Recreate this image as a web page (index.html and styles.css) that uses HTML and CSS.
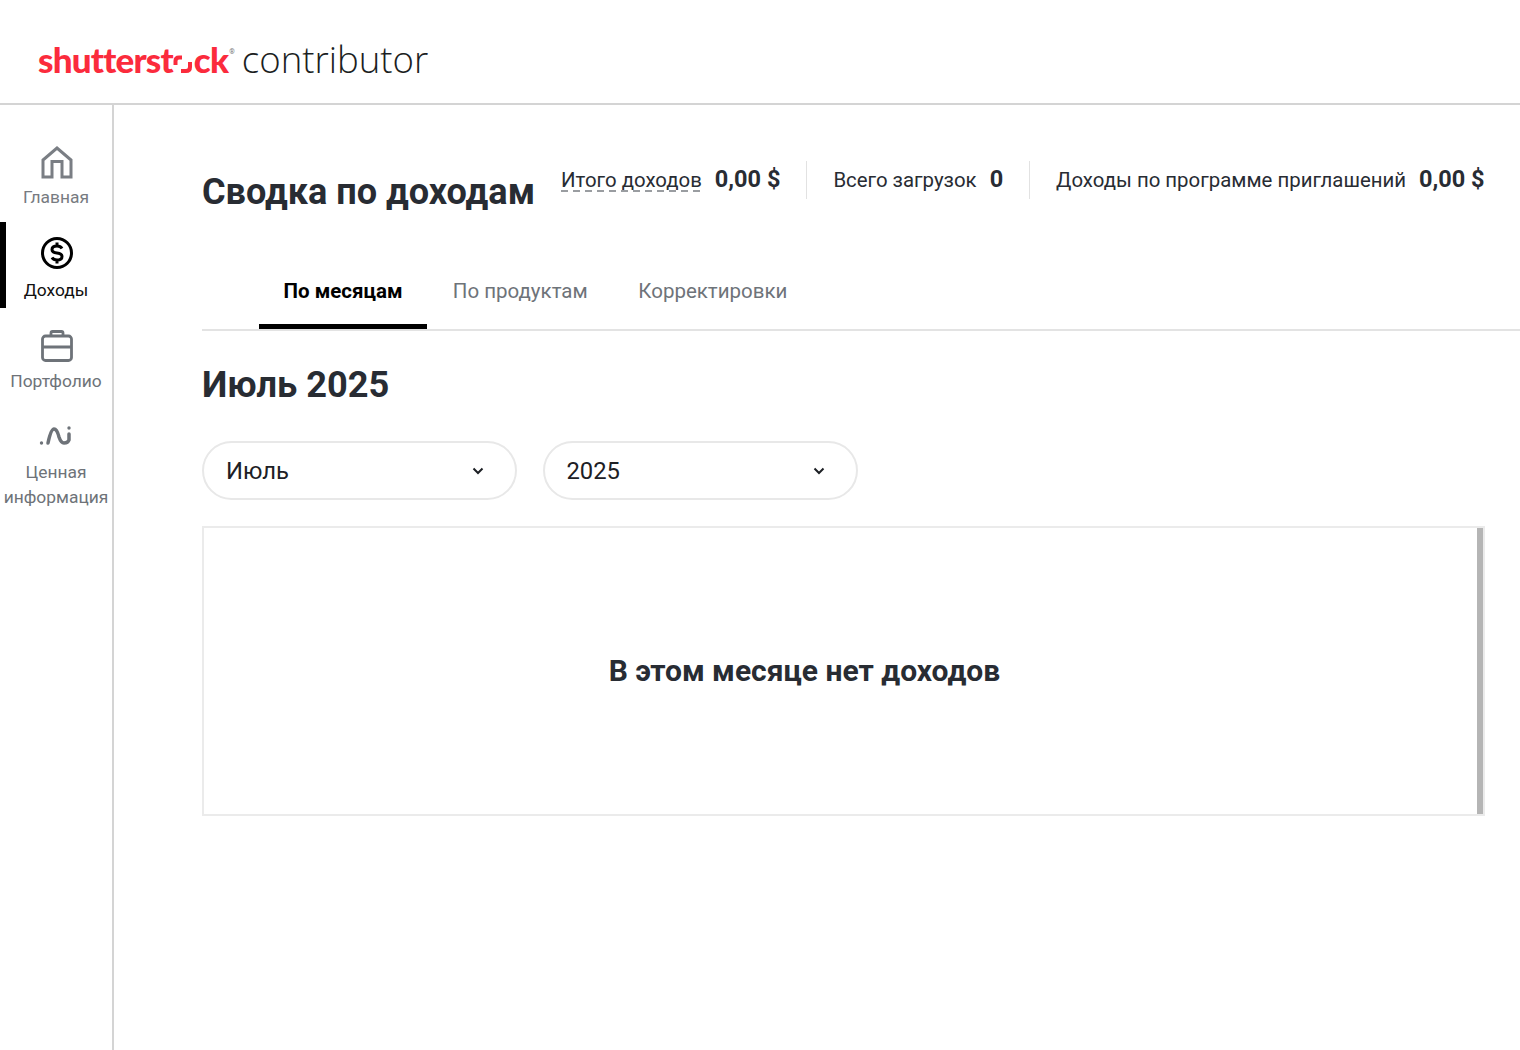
FILE: index.html
```html
<!DOCTYPE html>
<html lang="ru">
<head>
<meta charset="utf-8">
<title>Сводка по доходам</title>
<link rel="stylesheet" href="styles.css">
</head>
<body>
<header class="topbar">
  <a class="logo">
    <span class="logo-red">shutterst<svg class="logo-o" viewBox="0 0 20 20"><path d="M2.500 11V7Q2.500 3.500 6 3.500H9" /><path d="M17 8V13Q17 17 13 17H8" /></svg>ck</span><span class="logo-reg">®</span><span class="logo-sub">contributor</span>
  </a>
</header>
<div class="shell">
  <nav class="rail">
    <a class="rail-item item-home">
      <svg class="rail-icon" viewBox="0 0 36 36"><path d="M4 32V15L18 3L32 15V32H23V16.500H13V32Z"/></svg>
      <span>Главная</span>
    </a>
    <a class="rail-item item-earn active">
      <svg class="rail-icon" viewBox="0 0 36 36"><circle cx="18" cy="18" r="14.500"/><path d="M23 13.500Q21.500 11 18 11Q13 11 13 14.500Q13 17.500 18 18Q23 18.500 23 21.500Q23 25 18 25Q14.500 25 13 22.500M18 7.500V11M18 25V28.500"/></svg>
      <span>Доходы</span>
    </a>
    <a class="rail-item item-port">
      <svg class="rail-icon" viewBox="0 0 36 36"><rect x="3.500" y="8" width="29" height="24.500" rx="3"/><path d="M3.500 19H32.500M12 8V5Q12 3.500 13.500 3.500H22.500Q24 3.500 24 5V8"/></svg>
      <span>Портфолио</span>
    </a>
    <a class="rail-item item-info">
      <svg class="rail-icon icon-wave" viewBox="0 0 36 24"><path d="M9 19Q12 5 15 5Q18 5 20 13Q22 19 25 19Q29 19 30 16V10"/><circle class="dot" cx="2.500" cy="19" r="1.700"/><circle class="dot" cx="30" cy="4" r="1.700"/></svg>
      <span>Ценная<br>информация</span>
    </a>
  </nav>
  <main class="content">
    <div class="summary">
      <h1>Сводка по доходам</h1>
      <div class="stats">
        <div class="stat"><span class="dashed">Итого доходов</span><strong>0,00 $</strong></div>
        <div class="stat"><span>Всего загрузок</span><strong>0</strong></div>
        <div class="stat"><span>Доходы по программе приглашений</span><strong>0,00 $</strong></div>
      </div>
    </div>
    <div class="tabs">
      <a class="tab current">По месяцам</a>
      <a class="tab">По продуктам</a>
      <a class="tab">Корректировки</a>
    </div>
    <h2>Июль 2025</h2>
    <div class="filters">
      <div class="select"><span>Июль</span><svg viewBox="0 0 12 8"><path d="M1.500 1.500L6 6L10.500 1.500"/></svg></div>
      <div class="select"><span>2025</span><svg viewBox="0 0 12 8"><path d="M1.500 1.500L6 6L10.500 1.500"/></svg></div>
    </div>
    <section class="panel">
      <p>В этом месяце нет доходов</p>
      <div class="scrollbar"></div>
    </section>
  </main>
</div>
</body>
</html>
```
FILE: styles.css
```css
* { box-sizing: border-box; }
html, body { margin: 0; height: 100%; }
body {
  width: 1520px;
  height: 1050px;
  overflow: hidden;
  background: #fff;
  color: #282c33;
  font-family: Roboto, "Liberation Sans", sans-serif;
}
.topbar {
  height: 105px;
  border-bottom: 2px solid #d4d4d4;
  padding: 35px 0 0 38px;
}
.logo { display: flex; align-items: baseline; height: 48px; white-space: nowrap; }
.logo-red {
  font-family: Lato, sans-serif;
  font-weight: 900;
  font-size: 35px;
  letter-spacing: -0.800px;
  color: #fb2b3c;
  line-height: 48px;
}
.logo-o { width: 20px; height: 20px; margin: 0 1px -1px 0; fill: none; stroke: #fb2b3c; stroke-width: 4; }
.logo-reg { font-size: 7px; color: #777; position: relative; top: -19px; margin: 0 7px 0 1px; }
.logo-sub {
  font-family: "Open Sans", sans-serif;
  font-weight: 300;
  font-size: 36.600px;
  color: #1b1e22;
  line-height: 48px;
}
.shell { display: flex; height: 945px; }
.rail {
  width: 114px;
  flex: none;
  border-right: 2px solid #d4d4d4;
  padding-top: 38px;
  display: flex;
  flex-direction: column;
}
.rail-item {
  display: flex;
  flex-direction: column;
  align-items: center;
  font-size: 17.400px;
  line-height: 25px;
  color: #777b81;
  text-align: center;
  white-space: nowrap;
}
.rail-icon { width: 36px; height: 36px; fill: none; stroke: #6e7379; stroke-width: 2.600; flex: none; margin-left: 1px; }
.rail-item span { display: block; }
.item-home { height: 79px; }
.item-home .rail-icon { stroke: #7a7e84; stroke-width: 3; margin-top: 2px; margin-bottom: 4px; }
.item-earn {
  height: 86px;
  color: #111;
  border-left: 6px solid #000;
  padding-top: 13px;
  padding-right: 6px;
}
.item-earn .rail-icon { stroke: #000; stroke-width: 3; margin-bottom: 7px; }
.item-port { height: 92px; padding-top: 21px; color: #6e7379; }
.item-port .rail-icon { stroke-width: 2.800; margin-top: -1px; margin-bottom: 5px; }
.item-info { padding-top: 24px; color: #6e7379; }
.icon-wave { height: 24px; margin-bottom: 12px; stroke-linecap: round; stroke-width: 3.500; }
.dot { fill: #6e7379; stroke: none; }
.content { flex: 1; min-width: 0; padding: 54px 35px 0 88px; position: relative; }
.summary { display: flex; align-items: flex-start; }
h1 {
  margin: 13px 0 0;
  font-size: 36.100px;
  line-height: 40px;
  font-weight: 700;
  white-space: nowrap;
}
.stats { display: flex; margin-left: 26px; margin-top: 2px; }
.stat {
  display: flex;
  align-items: center;
  height: 38px;
  font-size: 20.400px;
  padding-right: 26px;
  margin-right: 26px;
  border-right: 1px solid #e2e2e2;
  white-space: nowrap;
}
.stat:last-child { border-right: 0; padding-right: 0; margin-right: 0; }
.stat strong { font-size: 23.500px; font-weight: 700; margin-left: 13px; position: relative; top: -1px; }
.dashed {
  line-height: 24px;
  background: repeating-linear-gradient(90deg, #9a9da1 0 7px, transparent 7px 12px) left bottom / 100% 2px no-repeat;
}
.tabs {
  display: flex;
  margin: 46px -35px 0 0;
  height: 73px;
  padding-left: 56.500px;
  border-bottom: 2px solid #e3e3e3;
}
.tab {
  font-size: 20.500px;
  line-height: 24px;
  padding: 21px 25.300px 0;
  height: 71px;
  color: #6e7379;
  white-space: nowrap;
}
.tab.current { color: #000; font-weight: 700; border-bottom: 5px solid #000; padding-left: 25px; padding-right: 25px; }
h2 { margin: 33px 0 0; font-size: 36.200px; line-height: 42px; font-weight: 700; }
.filters { display: flex; gap: 25.500px; margin-top: 35px; }
.select {
  width: 315px;
  height: 59px;
  border: 2px solid #e8e8e8;
  border-radius: 30px;
  display: flex;
  align-items: center;
  justify-content: space-between;
  padding: 0 31px 0 22px;
  font-size: 23.800px;
  color: #1d2025;
}
.select svg { width: 12px; height: 8px; fill: none; stroke: #1d2025; stroke-width: 2; }
.panel {
  margin-top: 26px;
  height: 290px;
  border: 2px solid #ebebeb;
  position: relative;
  display: flex;
  align-items: center;
  justify-content: center;
  padding: 0 78px 2px 0;
}
.panel p { margin: 0; font-size: 30px; font-weight: 700; }
.scrollbar { position: absolute; right: 0; top: 0; bottom: 0; width: 6px; background: #b5b5b5; }
```
